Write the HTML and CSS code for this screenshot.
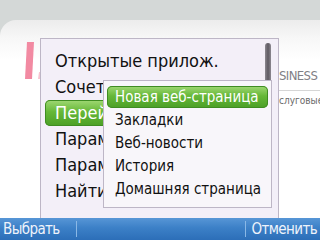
FILE: index.html
```html
<!DOCTYPE html>
<html>
<head>
<meta charset="utf-8">
<link rel="stylesheet" href="styles.css">
</head>
<body>
<div class="screen">
  <div class="top-bg"></div>
  <div class="page">
    <svg class="logo" width="20" height="40" viewBox="0 0 20 40">
      <polygon points="3,0 10,0 8,37 1,37" fill="#f28aa2"/>
      <polygon points="15,30 17,30 16,37 14,37" fill="#f7c4d0"/>
    </svg>
    <div class="brand">SINESS I</div>
    <div class="rule"></div>
    <div class="sub-text">слуговые</div>
  </div>
  <div class="softkeys">
    <span class="sk sk-left">Выбрать</span>
    <span class="sep"></span>
    <span class="sk-spacer"></span>
    <span class="sep"></span>
    <span class="sk sk-right">Отменить</span>
  </div>

  <div class="menu">
    <ul class="menu-list">
      <li class="item">Открытые прилож.</li>
      <li class="item">Сочетания</li>
      <li class="item selected">Перейти</li>
      <li class="item">Параметры</li>
      <li class="item">Параметры</li>
      <li class="item">Найти</li>
    </ul>
    <div class="scrollbar"></div>
  </div>

  <div class="submenu">
    <ul class="sub-list">
      <li class="sitem selected">Новая веб-страница</li>
      <li class="sitem">Закладки</li>
      <li class="sitem">Веб-новости</li>
      <li class="sitem">История</li>
      <li class="sitem">Домашняя страница</li>
    </ul>
  </div>
</div>
</body>
</html>
```

FILE: styles.css
```css
* { box-sizing: border-box; }
html, body {
  margin: 0;
  padding: 0;
  width: 320px;
  height: 240px;
  overflow: hidden;
}
body {
  font-family: "DejaVu Sans Condensed", "DejaVu Sans", sans-serif;
  background: #d4d8d7;
}
.screen {
  position: relative;
  width: 320px;
  height: 240px;
  display: flex;
  flex-direction: column;
  overflow: hidden;
}
.top-bg {
  height: 20px;
  flex: none;
}
.page {
  position: relative;
  flex: 1;
  overflow: hidden;
  border-top-left-radius: 16px;
  background: linear-gradient(#ececec 0px, #f7f7f7 18px, #ffffff 40px);
}
.logo {
  position: absolute;
  left: 24px;
  top: 22px;
}
.brand {
  position: absolute;
  left: 279px;
  top: 48px;
  font-size: 13px;
  color: #808085;
  white-space: nowrap;
  letter-spacing: -0.6px;
}
.rule {
  position: absolute;
  left: 272px;
  right: 0;
  top: 70px;
  height: 1px;
  background: #d6d6d6;
}
.sub-text {
  position: absolute;
  left: 279px;
  top: 75px;
  font-size: 10px;
  color: #6a6a6a;
  white-space: nowrap;
}
.softkeys {
  height: 22px;
  flex: none;
  display: flex;
  align-items: center;
  background: linear-gradient(#5796d6 0%, #3c80c7 45%, #2c6eb8 100%);
  color: #eef3fb;
  font-size: 15px;
  letter-spacing: -0.6px;
}
.sk-left { padding-left: 3px; width: 76px; }
.sk-right { width: 74px; text-align: right; padding-right: 3px; }
.sk-spacer { flex: 1; }
.sep {
  width: 1px;
  height: 16px;
  background: #8ab8e6;
}
.menu {
  position: absolute;
  left: 40px;
  top: 38px;
  width: 239px;
  height: 180px;
  background: #f3eff8;
  border: 1px solid #bdb6c6;
  border-bottom: none;
}
.menu-list {
  list-style: none;
  margin: 0;
  padding: 9px 15px 0 4px;
}
.item {
  height: 26px;
  line-height: 26px;
  padding-left: 10px;
  font-size: 18px;
  color: #111;
  white-space: nowrap;
  border-radius: 5px;
}
.item.selected {
  color: #fff;
  background: linear-gradient(#a0d874 0%, #66b838 45%, #4b9f26 100%);
  box-shadow: inset 0 0 0 1px #3f8c22;
}
.scrollbar {
  position: absolute;
  left: 224px;
  top: 4px;
  width: 6px;
  height: 70px;
  border-radius: 3px;
  background: linear-gradient(90deg, #8c8890, #5e5a62 50%, #8c8890);
}
.submenu {
  position: absolute;
  left: 103px;
  top: 80px;
  width: 169px;
  height: 128px;
  background: #f8f6fa;
  border: 1px solid #bdb6c6;
}
.sub-list {
  list-style: none;
  margin: 0;
  padding: 5px 3px 0 3px;
}
.sitem {
  height: 23px;
  line-height: 22px;
  padding-left: 8px;
  font-size: 15px;
  color: #111;
  white-space: nowrap;
  border-radius: 5px;
}
.sitem.selected {
  height: 22px;
  margin-bottom: 1px;
  color: #fff;
  background: linear-gradient(#a0d874 0%, #66b838 45%, #4b9f26 100%);
  box-shadow: inset 0 0 0 1px #3f8c22;
}
```
